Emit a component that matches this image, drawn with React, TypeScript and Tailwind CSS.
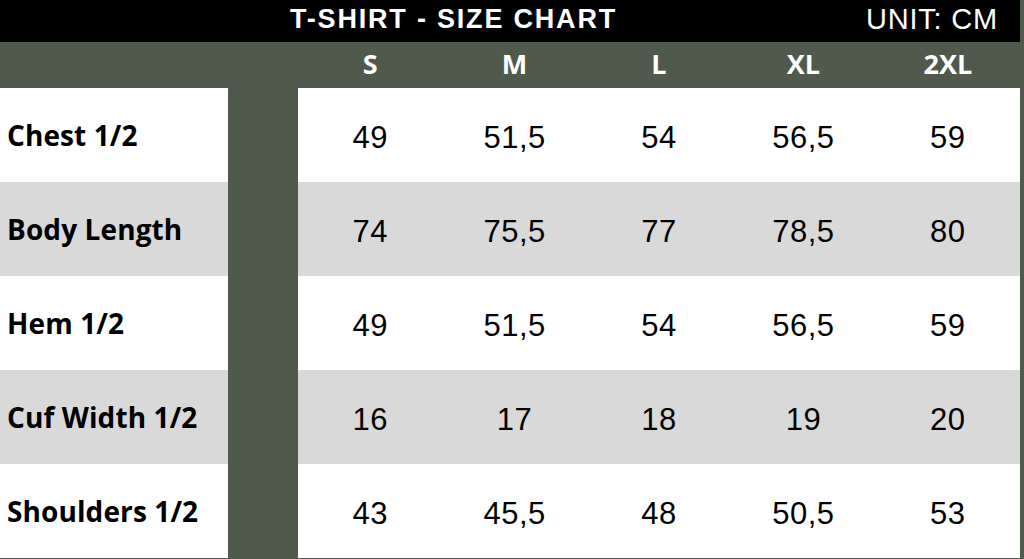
import React from 'react';

const sizes = ['S', 'M', 'L', 'XL', '2XL'];

const rows: { label: string; values: string[] }[] = [
    { label: 'Chest 1/2', values: ['49', '51,5', '54', '56,5', '59'] },
    { label: 'Body Length', values: ['74', '75,5', '77', '78,5', '80'] },
    { label: 'Hem 1/2', values: ['49', '51,5', '54', '56,5', '59'] },
    { label: 'Cuf Width 1/2', values: ['16', '17', '18', '19', '20'] },
    { label: 'Shoulders 1/2', values: ['43', '45,5', '48', '50,5', '53'] },
];

const gridCols = 'grid grid-cols-[228px_70px_repeat(5,1fr)]';

const App: React.FC = () => {
    return (
        <div className="h-[559px] w-[1024px] overflow-hidden bg-[#4f5a4d]">
            <div className="w-[1020px]">
                {/* Title bar */}
                <div className="flex h-[42px] items-center bg-black pb-[3px] text-white [font-family:'Liberation_Sans',Arial,sans-serif]">
                    <span className="pl-[290px] text-[27px] font-bold tracking-[1.8px]">T-SHIRT - SIZE CHART</span>
                    <span className="ml-auto pr-[22px] text-[29px] tracking-[0.8px]">UNIT: CM</span>
                </div>

                {/* Size header */}
                <div className={`${gridCols} h-[46px] items-center pb-[2px] text-[27px] font-bold text-white [font-family:'Open_Sans',sans-serif]`}>
                    <div />
                    <div />
                    {sizes.map(size => (
                        <div key={size} className="text-center">
                            {size}
                        </div>
                    ))}
                </div>

                {/* Rows */}
                {rows.map((row, idx) => {
                    const bg = idx % 2 === 0 ? 'bg-white' : 'bg-[#d9d9d9]';
                    return (
                        <div key={row.label} className={`${gridCols} h-[94px]`}>
                            <div className={`${bg} flex items-center whitespace-nowrap pl-[7px] text-[28px] font-bold tracking-[0.1px] text-black [font-family:'Open_Sans',sans-serif]`}>
                                {row.label}
                            </div>
                            <div />
                            {row.values.map((value, i) => (
                                <div
                                    key={i}
                                    className={`${bg} flex items-center justify-center pt-[6px] text-[31px] tracking-[0.5px] text-black [font-family:'Liberation_Sans',Arial,sans-serif]`}
                                >
                                    {value}
                                </div>
                            ))}
                        </div>
                    );
                })}
            </div>
        </div>
    );
};

export default App;
